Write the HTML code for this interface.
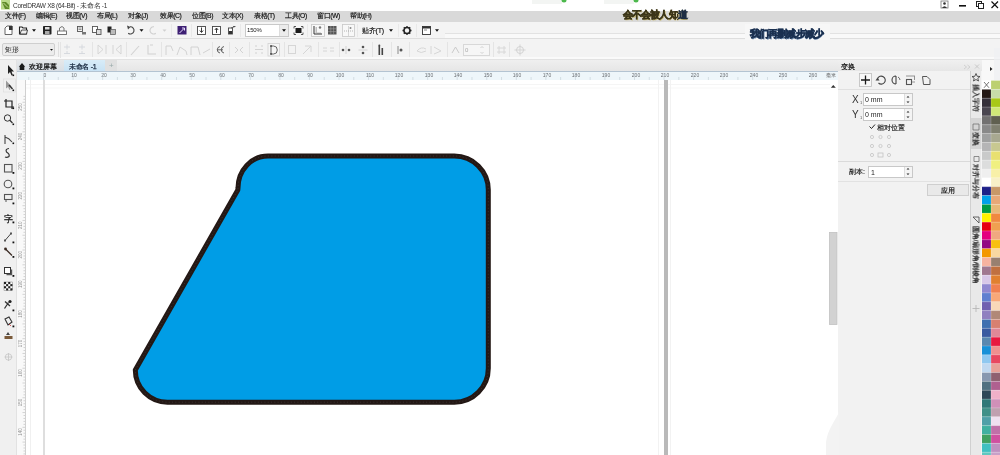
<!DOCTYPE html>
<html><head><meta charset="utf-8">
<style>
*{margin:0;padding:0;box-sizing:border-box}
html,body{width:1000px;height:455px;overflow:hidden;background:#fff;font-family:"Liberation Sans",sans-serif;color:#222}
.a{position:absolute}
.t{position:absolute;white-space:nowrap;line-height:1;will-change:transform}
.mi{top:12.5px;font-size:6.8px;color:#111;letter-spacing:-0.4px;-webkit-text-stroke:0.15px #111}
.rl{top:73px;font-size:5px;color:#6a6e72;transform:translateX(-50%)}
.dk{font-size:6.5px;color:#222}
</style></head><body>
<!-- backgrounds -->
<div class="a" style="left:0;top:0;width:1000px;height:11px;background:#fff"></div>
<div class="a" style="left:0;top:11px;width:1000px;height:11px;background:#d9d9d9"></div>
<div class="a" style="left:0;top:22px;width:1000px;height:16px;background:#f4f4f4"></div>
<div class="a" style="left:0;top:38px;width:1000px;height:1px;background:#dedede"></div>
<div class="a" style="left:0;top:39px;width:1000px;height:21px;background:#f3f3f3;border-bottom:1px solid #e2e2e2"></div>
<div class="a" style="left:0;top:57px;width:1000px;height:2px;background:#fafafa"></div>
<div class="a" style="left:0;top:60px;width:17px;height:395px;background:#f0f0f0"></div>
<div class="a" style="left:17px;top:60px;width:821px;height:11px;background:linear-gradient(#efefef,#e6e6e6)"></div>
<div class="a" style="left:17px;top:60px;width:47px;height:11px;background:linear-gradient(#e6e8ea,#d8dee4)"></div>
<div class="a" style="left:64px;top:60px;width:41px;height:11px;background:linear-gradient(#d8ecf8,#c8e2f4)"></div>
<div class="a" style="left:105px;top:60px;width:12px;height:11px;background:#e0e0e0"></div>
<div class="a" style="left:17px;top:70.5px;width:821px;height:10px;background:#eef6fa;border-top:1px solid #b4c4d2;border-bottom:1px solid #d4d8dc"></div>
<div class="a" style="left:17px;top:80px;width:8px;height:375px;background:#f9f9f9"></div>
<div class="a" style="left:25px;top:80px;width:805px;height:375px;background:#fff"></div>
<div class="a" style="left:830px;top:80px;width:8px;height:375px;background:#fff"></div>
<div class="a" style="left:838px;top:60px;width:144px;height:11px;background:linear-gradient(#f0f0f0,#e6e6e6)"></div>
<div class="a" style="left:838px;top:71px;width:132px;height:384px;background:#f2f2f2"></div>
<div class="a" style="left:970px;top:71px;width:12px;height:384px;background:#e9e9e9"></div>
<div class="a" style="left:982px;top:60px;width:18px;height:20.5px;background:#f8f8f8"></div>

<!-- title -->
<div class="t" style="left:13px;top:2.5px;font-size:6.5px;color:#333;letter-spacing:-0.28px">CorelDRAW X8 (64-Bit) - 未命名 -1</div>
<!-- menu -->
<div class="t mi" style="left:5px">文件(F)</div>
<div class="t mi" style="left:36px">编辑(E)</div>
<div class="t mi" style="left:66px">视图(V)</div>
<div class="t mi" style="left:97px">布局(L)</div>
<div class="t mi" style="left:128px">对象(J)</div>
<div class="t mi" style="left:160px">效果(C)</div>
<div class="t mi" style="left:192px">位图(B)</div>
<div class="t mi" style="left:222px">文本(X)</div>
<div class="t mi" style="left:254px">表格(T)</div>
<div class="t mi" style="left:285px">工具(O)</div>
<div class="t mi" style="left:317px">窗口(W)</div>
<div class="t mi" style="left:350px">帮助(H)</div>

<!-- toolbar texts -->
<div class="a" style="left:245px;top:24px;width:44px;height:13px;background:#fff;border:1px solid #c9c9c9"></div>
<div class="a" style="left:279px;top:25px;width:9px;height:11px;background:#ececec;border-left:1px solid #ddd"></div>
<div class="t" style="left:247px;top:27.3px;font-size:6px;color:#222;letter-spacing:-0.2px">150%</div>
<div class="t" style="left:362px;top:27px;font-size:7px;color:#111;letter-spacing:-0.2px;-webkit-text-stroke:0.15px #111">贴齐(T)</div>
<!-- property bar combo -->
<div class="a" style="left:2px;top:43px;width:53px;height:13px;background:#ececec;border:1px solid #cfcfcf;border-radius:2px"></div>
<div class="t" style="left:5px;top:46px;font-size:7px;color:#222">矩形</div>
<div class="a" style="left:463px;top:44px;width:27px;height:12px;background:#f6f6f6;border:1px solid #d8d8d8"></div>
<div class="t" style="left:465px;top:47px;font-size:6px;color:#aaa">0</div>

<!-- tabs -->
<div class="t" style="left:29px;top:62.5px;font-size:7px;color:#111;-webkit-text-stroke:0.25px #111">欢迎屏幕</div>
<div class="t" style="left:69px;top:62.5px;font-size:7px;color:#1a2a40;-webkit-text-stroke:0.25px #1a2a40;letter-spacing:-0.3px">未命名 -1</div>
<div class="t" style="left:109px;top:62px;font-size:8px;color:#9aa">+</div>
<div class="t rl" style="left:44.5px">0</div><div class="t rl" style="left:74.0px">10</div><div class="t rl" style="left:103.6px">20</div><div class="t rl" style="left:133.2px">30</div><div class="t rl" style="left:162.7px">40</div><div class="t rl" style="left:192.2px">50</div><div class="t rl" style="left:221.8px">60</div><div class="t rl" style="left:251.3px">70</div><div class="t rl" style="left:280.9px">80</div><div class="t rl" style="left:310.4px">90</div><div class="t rl" style="left:340.0px">100</div><div class="t rl" style="left:369.6px">110</div><div class="t rl" style="left:399.1px">120</div><div class="t rl" style="left:428.7px">130</div><div class="t rl" style="left:458.2px">140</div><div class="t rl" style="left:487.8px">150</div><div class="t rl" style="left:517.3px">160</div><div class="t rl" style="left:546.9px">170</div><div class="t rl" style="left:576.4px">180</div><div class="t rl" style="left:606.0px">190</div><div class="t rl" style="left:635.5px">200</div><div class="t rl" style="left:665.1px">210</div><div class="t rl" style="left:694.6px">220</div><div class="t rl" style="left:724.1px">230</div><div class="t rl" style="left:753.7px">240</div><div class="t rl" style="left:783.2px">250</div><div class="t rl" style="left:812.8px">260</div>
<div class="t" style="left:826px;top:73px;font-size:5px;color:#555">毫米</div>

<!-- docker -->
<div class="t" style="left:841px;top:62.5px;font-size:7px;color:#111;-webkit-text-stroke:0.2px #111">变换</div>
<div class="t" style="left:852px;top:94.5px;font-size:10px;color:#333">X</div><div class="t" style="left:859.5px;top:101px;font-size:4px;color:#555">1</div>
<div class="t" style="left:852px;top:109.5px;font-size:10px;color:#333">Y</div><div class="t" style="left:859.5px;top:116px;font-size:4px;color:#555">1</div>
<div class="a" style="left:863px;top:93px;width:50px;height:13px;background:#fff;border:1px solid #c8c8c8"></div>
<div class="a" style="left:863px;top:108px;width:50px;height:13px;background:#fff;border:1px solid #c8c8c8"></div>
<div class="a" style="left:904px;top:94px;width:8px;height:11px;background:#f4f4f4;border-left:1px solid #ddd"></div>
<div class="a" style="left:904px;top:109px;width:8px;height:11px;background:#f4f4f4;border-left:1px solid #ddd"></div>
<div class="t" style="left:865px;top:96px;font-size:7px;color:#222">0 mm</div>
<div class="t" style="left:865px;top:111px;font-size:7px;color:#222">0 mm</div>
<div class="t" style="left:877px;top:123.5px;font-size:7px;color:#111;-webkit-text-stroke:0.15px #111">相对位置</div>
<div class="a" style="left:838px;top:160.5px;width:132px;height:1px;background:#dadada"></div>
<div class="a" style="left:838px;top:88.5px;width:132px;height:1px;background:#e0e0e0"></div>
<div class="t" style="left:849px;top:168px;font-size:7px;color:#111;-webkit-text-stroke:0.15px #111">副本:</div>
<div class="a" style="left:868px;top:166px;width:45px;height:12px;background:#fff;border:1px solid #c8c8c8"></div>
<div class="a" style="left:904px;top:167px;width:8px;height:10px;background:#f4f4f4;border-left:1px solid #ddd"></div>
<div class="t" style="left:871px;top:168.5px;font-size:7px;color:#222">1</div>
<div class="a" style="left:838px;top:181px;width:132px;height:1px;background:#e2e2e2"></div>
<div class="a" style="left:927px;top:184px;width:42px;height:12px;background:#e9e9e9;border:1px solid #cfcfcf"></div>
<div class="t" style="left:941px;top:186.5px;font-size:7px;color:#111;-webkit-text-stroke:0.15px #111">应用</div>


<svg class="a" style="left:0;top:0" width="1000" height="455" viewBox="0 0 1000 455">

  <!-- title icon -->
  <rect x="1" y="0" width="9" height="9.5" fill="#b9d98a"/>
  <path d="M2,2 L6,2 L9,5 L9,9 L5,9 Z" fill="#5f8a2a"/>
  <path d="M3.5,3 L8,7.5" stroke="#d8ecb0" stroke-width="0.8"/>
  <!-- window controls -->
  <rect x="941" y="1" width="7" height="7" fill="#fff" stroke="#777" stroke-width="0.8"/>
  <circle cx="944.5" cy="3.5" r="1.3" fill="#333"/><path d="M942,8 Q944.5,4.5 947,8 Z" fill="#333"/>
  <rect x="959" y="5" width="7" height="1.6" fill="#111"/>
  <rect x="976.5" y="1.5" width="5" height="5" fill="none" stroke="#222" stroke-width="1"/>
  <rect x="978.5" y="3.5" width="5" height="5" fill="#fff" stroke="#222" stroke-width="1"/>
  <path d="M991.5,1.5 L998,8 M998,1.5 L991.5,8" stroke="#111" stroke-width="1.2"/>
  <!-- toolbar 1 -->
  <path d="M5,28 L7,26 L12,26 L12,34.5 L5,34.5 Z" fill="#fff" stroke="#555" stroke-width="0.9"/>
  <rect x="9" y="26" width="3.5" height="4" fill="#333"/>
  <path d="M19.5,27 L22,27 L23,28 L26.5,28 L26.5,34 L19.5,34 Z" fill="#fff" stroke="#222" stroke-width="1.1"/>
  <path d="M20,34 L21.5,30 L27.5,30 L26.5,34 Z" fill="#eee" stroke="#222" stroke-width="0.8"/>
  <path d="M32,29.3 L36,29.3 L34,31.8 Z" fill="#111"/>
  <rect x="43" y="26" width="8.5" height="8.5" rx="0.8" fill="#222"/>
  <rect x="45" y="27" width="4.5" height="2.5" fill="#ddd"/>
  <rect x="45" y="31" width="4.5" height="3" fill="#aaa"/>
  <path d="M59.5,31 L59.5,28 L62,26.5 L64,28 L64,31" fill="none" stroke="#666" stroke-width="0.9"/>
  <rect x="57.5" y="31" width="9" height="3.5" fill="#fff" stroke="#666" stroke-width="0.9"/>
  <rect x="77.5" y="26.5" width="5" height="5" fill="none" stroke="#555" stroke-width="0.9"/>
  <path d="M78.5,28 h3 M78.5,29.5 h3" stroke="#555" stroke-width="0.6"/>
  <rect x="82" y="32" width="4" height="2.5" fill="#777"/>
  <rect x="92.5" y="26.5" width="5" height="6" fill="#fff" stroke="#555" stroke-width="0.9"/>
  <rect x="96.5" y="29.5" width="4.5" height="5" fill="#ddd" stroke="#555" stroke-width="0.9"/>
  <rect x="107.5" y="26.5" width="4" height="6" fill="#222"/>
  <rect x="110.5" y="29.5" width="5" height="5" fill="#bbb" stroke="#555" stroke-width="0.7"/>
  <path d="M130,26.8 A3.6,3.6 0 1 1 128.2,33.2" fill="none" stroke="#444" stroke-width="1.1"/>
  <path d="M127,25.5 L130.5,27 L128,29.5 Z" fill="#444"/>
  <path d="M139.5,29.3 L143.5,29.3 L141.5,31.8 Z" fill="#111"/>
  <path d="M154,26.8 A3.6,3.6 0 1 0 155.8,33.2" fill="none" stroke="#cfcfcf" stroke-width="1.1"/>
  <path d="M162.5,29.5 L166.5,29.5 L164.5,31.8 Z" fill="#d0d0d0"/>
  <line x1="171.5" y1="24" x2="171.5" y2="37" stroke="#e8e8e8" stroke-width="1"/>
  <rect x="177.5" y="26" width="9" height="8.5" fill="#3d1f73"/>
  <path d="M179.5,33 L184,28.5 M182,28 L184.5,28 L184.5,30.5" stroke="#e8dcff" stroke-width="1" fill="none"/>
  <line x1="191.5" y1="24" x2="191.5" y2="37" stroke="#e8e8e8" stroke-width="1"/>
  <rect x="197.5" y="26.5" width="8" height="8" fill="#fff" stroke="#444" stroke-width="0.9"/>
  <path d="M201.5,27.5 v4.5 M199.8,30.5 L201.5,32.5 L203.2,30.5" stroke="#222" stroke-width="0.9" fill="none"/>
  <rect x="212.5" y="26.5" width="8" height="8" fill="#fff" stroke="#444" stroke-width="0.9"/>
  <path d="M216.5,33 v-4.5 M214.8,30 L216.5,28 L218.2,30" stroke="#222" stroke-width="0.9" fill="none"/>
  <rect x="228.5" y="28" width="4" height="6" fill="#fff" stroke="#444" stroke-width="0.9"/>
  <rect x="229" y="31" width="3" height="3" fill="#333"/>
  <path d="M231,28 L235,26.5 M233,26.5 h2.5" stroke="#444" stroke-width="0.8"/>
  <line x1="240.5" y1="24" x2="240.5" y2="37" stroke="#e8e8e8" stroke-width="1"/>
  <path d="M282,29.3 L286,29.3 L284,31.8 Z" fill="#111"/>
  <rect x="295.5" y="28" width="6" height="5" fill="#1a1a1a"/>
  <path d="M294,26.5 h2 M294,26.5 v2 M303,26.5 h-2 M303,26.5 v2 M294,34.5 h2 M294,34.5 v-2 M303,34.5 h-2 M303,34.5 v-2" stroke="#333" stroke-width="0.8"/>
  <line x1="307.5" y1="24" x2="307.5" y2="37" stroke="#e8e8e8" stroke-width="1"/>
  <rect x="311.5" y="24.5" width="13" height="12" fill="#f8f8f8" stroke="#c8c8c8" stroke-width="0.8"/>
  <path d="M314,26 v8 h8" stroke="#333" stroke-width="1" fill="none"/>
  <path d="M315.5,28 h1.5 M315.5,30 h1.5 M315.5,32 h1.5 M318,32.5 v1 M320,32.5 v1" stroke="#555" stroke-width="0.7"/>
  <circle cx="320" cy="27.5" r="1.2" fill="#777"/>
  <rect x="328" y="26" width="8.5" height="8.5" fill="#555"/>
  <path d="M330.8,26 v8.5 M333.6,26 v8.5 M328,28.8 h8.5 M328,31.6 h8.5" stroke="#aaa" stroke-width="0.5"/>
  <rect x="342.5" y="24.5" width="12" height="12" fill="#f8f8f8" stroke="#c8c8c8" stroke-width="0.8"/>
  <path d="M344,31 h9 M348.5,26.5 v9" stroke="#999" stroke-width="0.7" stroke-dasharray="1,1"/>
  <circle cx="350.5" cy="28" r="1" fill="#888"/>
  <line x1="357.5" y1="24" x2="357.5" y2="37" stroke="#e8e8e8" stroke-width="1"/>
  <path d="M389,29.3 L393,29.3 L391,31.8 Z" fill="#111"/>
  <line x1="398.5" y1="24" x2="398.5" y2="37" stroke="#e8e8e8" stroke-width="1"/>
  <circle cx="407" cy="30.5" r="3" fill="none" stroke="#222" stroke-width="1.6"/>
  <path d="M407,26 v1.5 M407,33.5 v1.5 M402.5,30.5 h1.5 M410,30.5 h1.5 M403.8,27.3 l1,1 M409.2,32.7 l1,1 M410.2,27.3 l-1,1 M404.8,32.7 l-1,1" stroke="#222" stroke-width="1.3"/>
  <line x1="416.5" y1="24" x2="416.5" y2="37" stroke="#e8e8e8" stroke-width="1"/>
  <rect x="422.5" y="26.5" width="8" height="8" fill="#fff" stroke="#333" stroke-width="0.9"/>
  <rect x="422.5" y="26.5" width="8" height="2" fill="#333"/>
  <path d="M424,30 h3" stroke="#555" stroke-width="0.7"/>
  <path d="M435,29.3 L439,29.3 L437,31.8 Z" fill="#111"/>


  <!-- property bar -->
  <path d="M50,49 L53,49 L51.5,50.8 Z" fill="#111"/>
  <line x1="58.5" y1="42" x2="58.5" y2="57" stroke="#e0e0e0" stroke-width="1"/>
  <line x1="60.5" y1="42" x2="60.5" y2="58" stroke="#e4e4e4" stroke-width="1"/>
  <path d="M64,47 h6 M67,44.5 v5 M64,53.5 h6 M67,51 v3" stroke="#d4d7dc" stroke-width="0.9"/>
  <path d="M79,47 h6 M82,44.5 v5 M79,53.5 h6 M82,51 v3" stroke="#d4d7dc" stroke-width="0.9"/>
  <line x1="92.5" y1="42" x2="92.5" y2="57" stroke="#e4e4e4" stroke-width="1"/>
  <path d="M98,45 L98,54 L103,49.5 Z M106,45 L106,54" fill="none" stroke="#d4d4d4" stroke-width="0.9"/>
  <path d="M113,45 L113,54 M116,49.5 L121,45 L121,54 Z" fill="none" stroke="#d2d2d2" stroke-width="0.9"/>
  <line x1="126.5" y1="42" x2="126.5" y2="57" stroke="#e4e4e4" stroke-width="1"/>
  <path d="M131,55 L139,46" stroke="#d2d2d2" stroke-width="1.1"/>
  <path d="M148,45 L148,54 L156,54 M150,45 L153,45" fill="none" stroke="#d2d2d2" stroke-width="1.1"/>
  <line x1="161.5" y1="42" x2="161.5" y2="57" stroke="#e4e4e4" stroke-width="1"/>
  <path d="M166,55 L166,46 L171,46 L173,51 M177,55 L180,47 L186,51 L187,55 M191,55 L191,47 L198,47 L200,55 M203,53 L210,49" fill="none" stroke="#d2d2d2" stroke-width="1"/>
  <line x1="212.5" y1="42" x2="212.5" y2="57" stroke="#e4e4e4" stroke-width="1"/>
  <path d="M220,46.5 A3.3,3.3 0 0 0 220,53 M224,46.5 A3.3,3.3 0 0 0 224,53 M217,49.8 h6" fill="none" stroke="#555" stroke-width="0.9"/>
  <line x1="229.5" y1="42" x2="229.5" y2="57" stroke="#e4e4e4" stroke-width="1"/>
  <path d="M235,47 L238,50 L235,53 M243,47 L240,50 L243,53" fill="none" stroke="#d2d2d2" stroke-width="1"/>
  <line x1="249.5" y1="42" x2="249.5" y2="57" stroke="#e4e4e4" stroke-width="1"/>
  <path d="M256,45 v2 M256,52 v2 M262,45 v2 M262,52 v2 M255,49.5 h8" stroke="#d2d2d2" stroke-width="1"/>
  <rect x="268" y="43.5" width="11.5" height="12.5" fill="#f6f6f6" stroke="#d2d2d2" stroke-width="0.8"/>
  <path d="M271,46 L273.5,46 A3.8,4 0 0 1 273.5,54 L271,54 Z" fill="none" stroke="#555" stroke-width="0.9"/><circle cx="271" cy="46" r="0.9" fill="#444"/><circle cx="271" cy="54" r="0.9" fill="#444"/>
  <line x1="284.5" y1="42" x2="284.5" y2="57" stroke="#e4e4e4" stroke-width="1"/>
  <rect x="288.5" y="45.5" width="7" height="8" fill="none" stroke="#d6d6d6" stroke-width="1"/>
  <path d="M303,54 L311,46 M305,46 L311,46 L311,52" fill="none" stroke="#d6d6d6" stroke-width="1"/>
  <line x1="318.5" y1="42" x2="318.5" y2="57" stroke="#e4e4e4" stroke-width="1"/>
  <path d="M323,48 h4 M330,48 h4 M323,51 h4 M330,51 h4" stroke="#d6d6d6" stroke-width="1"/>
  <line x1="339.5" y1="42" x2="339.5" y2="57" stroke="#e4e4e4" stroke-width="1"/>
  <circle cx="343" cy="50" r="1.3" fill="#555"/><circle cx="349" cy="50" r="1.3" fill="#555"/>
  <path d="M346,46 v8" stroke="#cacaca" stroke-width="0.8"/>
  <circle cx="363" cy="47" r="1.3" fill="#555"/><circle cx="363" cy="53" r="1.3" fill="#555"/>
  <path d="M358.5,50 h9" stroke="#cacaca" stroke-width="0.8"/>
  <line x1="372.5" y1="42" x2="372.5" y2="57" stroke="#e4e4e4" stroke-width="1"/>
  <rect x="378.5" y="46" width="1.6" height="9" fill="#444"/><rect x="381.5" y="48" width="1.6" height="7" fill="#444"/>
  <circle cx="379.3" cy="45.5" r="1" fill="#444"/>
  <line x1="391.5" y1="42" x2="391.5" y2="57" stroke="#e4e4e4" stroke-width="1"/>
  <path d="M398,46 v8" stroke="#888" stroke-width="1"/><circle cx="401" cy="50" r="1.5" fill="#555"/>
  <line x1="409.5" y1="42" x2="409.5" y2="57" stroke="#e4e4e4" stroke-width="1"/>
  <path d="M417,51 Q421,46 426,49 M417,51 Q421,54 426,51" fill="none" stroke="#d6d6d6" stroke-width="1"/>
  <path d="M431,46 L431,54 M434,47 L441,51 L434,54" fill="none" stroke="#d6d6d6" stroke-width="1"/>
  <line x1="447.5" y1="42" x2="447.5" y2="57" stroke="#e4e4e4" stroke-width="1"/>
  <path d="M452,53 L455.5,47 L459,53" fill="none" stroke="#cacaca" stroke-width="1"/>
  <path d="M480.5,48 L482,46.5 L483.5,48 M480.5,52 L482,53.5 L483.5,52" fill="none" stroke="#cacaca" stroke-width="0.8"/>
  <line x1="493.5" y1="42" x2="493.5" y2="57" stroke="#e4e4e4" stroke-width="1"/>
  <path d="M497,48 h9 M497,52 h9 M499,46 v8 M504,46 v8" stroke="#d6d6d6" stroke-width="0.9"/>
  <line x1="509.5" y1="42" x2="509.5" y2="57" stroke="#e4e4e4" stroke-width="1"/>
  <circle cx="520" cy="50" r="3.5" fill="none" stroke="#d2d2d2" stroke-width="1"/>
  <path d="M520,44.5 v11 M514.5,50 h11" stroke="#d2d2d2" stroke-width="0.9"/>

  <!-- tab home icon -->
  <path d="M18.8,66.8 L22,63 L25.2,66.8 L24.3,66.8 L24.3,70 L19.7,70 L19.7,66.8 Z" fill="#1a1a1a"/>

  <!-- toolbox -->
  <path d="M8,65 L8,74 L10,72 L11.5,75.5 L12.8,75 L11.5,71.5 L14,71.5 Z" fill="#222"/>
  <rect x="12.5" y="74.5" width="1.6" height="1.6" fill="#111"/>
  <rect x="3.5" y="79" width="12" height="13" fill="none" stroke="#dedede" stroke-width="0.7"/>
  <path d="M6,80.5 L6,88.5 L8,87 L9.5,90 L10.5,89.5 L9.5,86.5 L11.5,86.5 Z" fill="#999"/>
  <path d="M9,85 L12.5,89" stroke="#333" stroke-width="1.5"/><rect x="12.5" y="89.5" width="1.6" height="1.6" fill="#111"/>
  <path d="M6,99 v8 h8 M4,101 h8 v8" fill="none" stroke="#222" stroke-width="1.2"/>
  <rect x="12.5" y="107.5" width="1.6" height="1.6" fill="#111"/>
  <circle cx="7.5" cy="118" r="3.2" fill="none" stroke="#333" stroke-width="1"/>
  <path d="M9.8,120.3 L12.5,123" stroke="#333" stroke-width="1.3"/><rect x="12.5" y="123.5" width="1.6" height="1.6" fill="#111"/>
  <path d="M5,135 L5,144 M5,137 Q9,138 12,142" fill="none" stroke="#444" stroke-width="1.1"/>
  <rect x="12.5" y="142.5" width="1.6" height="1.6" fill="#111"/>
  <path d="M9,148.5 Q5,149 6.5,152 Q10,154 9,156.5 Q7,158 5,157" fill="none" stroke="#333" stroke-width="1.2"/>
  <rect x="4.5" y="164.5" width="7.5" height="7.5" fill="none" stroke="#555" stroke-width="1.1"/>
  <rect x="12.5" y="172" width="1.8" height="1.8" fill="#111"/>
  <circle cx="8" cy="184" r="3.8" fill="none" stroke="#555" stroke-width="1.1"/>
  <rect x="12.5" y="187.5" width="1.8" height="1.8" fill="#111"/>
  <rect x="4.5" y="194.5" width="7.5" height="5" fill="none" stroke="#555" stroke-width="1.1"/>
  <path d="M6,199.5 v2.5" stroke="#555" stroke-width="1"/>
  <rect x="12.5" y="202.5" width="1.8" height="1.8" fill="#111"/>
  <text x="3.5" y="221.5" font-size="9" font-family="Liberation Sans" fill="#222" stroke="#222" stroke-width="0.3">字</text>
  <rect x="12.5" y="221.5" width="1.8" height="1.8" fill="#111"/>
  <path d="M5,240.5 L11,233.5" stroke="#444" stroke-width="1"/><rect x="4" y="239.5" width="2" height="2" fill="#555"/><rect x="10" y="232.5" width="2" height="2" fill="#555"/>
  <rect x="12.5" y="241.5" width="1.8" height="1.8" fill="#111"/>
  <path d="M5.5,249 L12,255.5" stroke="#3a2a22" stroke-width="1.3"/><circle cx="5.5" cy="249" r="1.4" fill="#3a2a22"/>
  <rect x="12.5" y="256" width="1.8" height="1.8" fill="#111"/>
  <rect x="4.5" y="267.5" width="6" height="6" fill="#fff" stroke="#333" stroke-width="1"/>
  <path d="M6.5,274.5 h5 v-5" fill="none" stroke="#555" stroke-width="1.4"/>
  <rect x="12.5" y="275" width="1.8" height="1.8" fill="#111"/>
  <rect x="4" y="282" width="8.4" height="8.4" fill="#fff" stroke="#555" stroke-width="0.4"/><rect x="4.0" y="282.0" width="2.1" height="2.1" fill="#222"/><rect x="4.0" y="286.2" width="2.1" height="2.1" fill="#222"/><rect x="6.1" y="284.1" width="2.1" height="2.1" fill="#222"/><rect x="6.1" y="288.3" width="2.1" height="2.1" fill="#222"/><rect x="8.2" y="282.0" width="2.1" height="2.1" fill="#222"/><rect x="8.2" y="286.2" width="2.1" height="2.1" fill="#222"/><rect x="10.3" y="284.1" width="2.1" height="2.1" fill="#222"/><rect x="10.3" y="288.3" width="2.1" height="2.1" fill="#222"/>
  <path d="M5,301.5 L10,306 M8.5,302.5 L4.5,308.5" stroke="#333" stroke-width="1.3"/>
  <circle cx="10" cy="301.5" r="1.6" fill="#222"/><rect x="12.5" y="309.5" width="1.8" height="1.8" fill="#111"/>
  <path d="M5,319 L9,317 L12,322 L8,325 Z" fill="none" stroke="#333" stroke-width="1.1"/>
  <path d="M9,324 L11,326" stroke="#c33" stroke-width="0.8"/>
  <rect x="12.5" y="325.5" width="1.8" height="1.8" fill="#111"/>
  <path d="M6,335 L8,332 L10,335 Z" fill="#444"/>
  <rect x="4.5" y="336" width="8" height="3" fill="#7a5a3a"/>
  <circle cx="8.5" cy="357" r="3.2" fill="none" stroke="#c8c8c8" stroke-width="0.9"/>
  <path d="M8.5,353 v8 M4.5,357 h8" stroke="#c8c8c8" stroke-width="0.9"/>
  <line x1="16.5" y1="60" x2="16.5" y2="455" stroke="#e2e2e2" stroke-width="1"/>


  <!-- docker icons -->
  <rect x="859.5" y="73.5" width="12" height="13" fill="#f8f8f8" stroke="#bdbdbd" stroke-width="0.8"/>
  <path d="M865.5,75.5 v9 M861,80 h9" stroke="#1a1a1a" stroke-width="1.3"/>
  <path d="M877.6,78.5 A4,4 0 1 1 878.5,83" fill="none" stroke="#444" stroke-width="1.1"/>
  <path d="M875.5,80.5 L879.5,80.5 L877.5,77.5 Z" fill="#444"/>
  <path d="M896,76 A4,4 0 0 0 896,84 M896,76 v8" fill="none" stroke="#444" stroke-width="1.1"/>
  <path d="M898,77 A3.5,3.5 0 0 1 900,80" fill="none" stroke="#666" stroke-width="1"/>
  <rect x="906.5" y="79.5" width="5" height="5" fill="none" stroke="#555" stroke-width="1.1"/>
  <path d="M906,76 h9 M914.5,76 v4 M912,82 h3" stroke="#888" stroke-width="0.9"/>
  <path d="M922.5,76.5 L927,76.5 L930,79.5 L930,84.5 L923.5,84.5 Z" fill="none" stroke="#555" stroke-width="1"/>
  <path d="M936.5,62 v9" stroke="#fff" stroke-width="0"/>
  <!-- docker spinners -->
  <path d="M906.5,97.5 L908,96 L909.5,97.5 Z M906.5,101.5 L908,103 L909.5,101.5 Z" fill="#222"/>
  <path d="M906.5,112.5 L908,111 L909.5,112.5 Z M906.5,116.5 L908,118 L909.5,116.5 Z" fill="#222"/>
  <path d="M906.5,169.5 L908,168 L909.5,169.5 Z M906.5,173.5 L908,175 L909.5,173.5 Z" fill="#222"/>
  <path d="M869.5,126.5 L871.5,128.5 L875,124.5" fill="none" stroke="#222" stroke-width="1"/>
  <!-- anchor grid -->
  <g fill="none" stroke="#c4c4c4" stroke-width="0.8">
    <circle cx="872" cy="137" r="1.6"/><circle cx="880.5" cy="137" r="1.6"/><circle cx="889" cy="137" r="1.6"/>
    <circle cx="872" cy="146" r="1.6"/><circle cx="880.5" cy="146" r="1.6"/><circle cx="889" cy="146" r="1.6"/>
    <circle cx="872" cy="155" r="1.6"/><rect x="878" y="153" width="5" height="4"/><circle cx="889" cy="155" r="1.6"/>
  </g>
  <path d="M964,65 L966.5,67 L964,69 M967.5,65 L970,67 L967.5,69" stroke="#c4c4c4" stroke-width="0.7" fill="none"/>
  <path d="M975,64.5 L979,68.5 M979,64.5 L975,68.5" stroke="#c0c0c0" stroke-width="0.8"/>
  <!-- tab strip -->
  <line x1="970.5" y1="71" x2="970.5" y2="455" stroke="#d0d0d0" stroke-width="1"/>
  <line x1="981.5" y1="71" x2="981.5" y2="455" stroke="#f4f4f4" stroke-width="1"/>
  <path d="M976,73.5 L977.2,76.3 L980,76.5 L977.8,78.3 L978.5,81 L976,79.5 L973.5,81 L974.2,78.3 L972,76.5 L974.8,76.3 Z" fill="none" stroke="#333" stroke-width="0.8"/>
  <rect x="971" y="118" width="10.5" height="31" fill="#d4d4d4"/>
  <path d="M973,124 L979,124 L979,130 L973,130 Z" fill="none" stroke="#666" stroke-width="0.7"/>
  <path d="M974,156.5 h5 v5 h-5 Z" fill="none" stroke="#666" stroke-width="0.7"/>
  <path d="M973,217 h6 v6 Z" fill="none" stroke="#444" stroke-width="0.8"/>
  <path d="M976,305 v7 M972.5,308.5 h7" stroke="#b8b8b8" stroke-width="0.9"/>


  <!-- toolbar right lines -->
  <line x1="445" y1="33.5" x2="1000" y2="33.5" stroke="#e2e2e2" stroke-width="1"/>
  <rect x="445" y="34" width="555" height="4" fill="#f9f9f9"/>
  <rect x="745" y="24" width="85" height="16" fill="#f7f7f7"/>
  <!-- top green dots -->
  <rect x="532" y="0" width="30" height="4" fill="#f3f5f3"/>
  <rect x="604" y="0" width="30" height="4" fill="#f3f5f3"/>
  <circle cx="564" cy="0" r="2.5" fill="#4cb84c"/>
  <circle cx="636" cy="0" r="2.5" fill="#4cb84c"/>


  <path d="M839,412 C836,420 828,428 826,442 L826,455 L839,455 Z" fill="#f3f3f3"/>
  <!-- page borders -->
  <line x1="25" y1="84.5" x2="830" y2="84.5" stroke="#f5f5f5" stroke-width="1"/>
  <line x1="25" y1="88" x2="830" y2="88" stroke="#f7f7f7" stroke-width="1"/>
  <line x1="25.5" y1="80" x2="25.5" y2="455" stroke="#d0d0d0" stroke-width="1"/>

  <line x1="44" y1="80" x2="44" y2="455" stroke="#dedede" stroke-width="2"/>
  <rect x="664" y="80" width="4" height="375" fill="#b9b9b9"/>
  <line x1="30.5" y1="80" x2="30.5" y2="455" stroke="#f0f0f0" stroke-width="1"/>
  <line x1="658.5" y1="80" x2="658.5" y2="455" stroke="#f2f2f2" stroke-width="1"/>
  <line x1="670.5" y1="80" x2="670.5" y2="455" stroke="#f2f2f2" stroke-width="1"/>
  <!-- scrollbar -->
  <rect x="829.5" y="232.5" width="7.5" height="92" fill="#d2d2d2" stroke="#c2c2c2" stroke-width="0.8"/>
  <path d="M830.8,87.8 L833.3,85 L835.8,87.8 Z" fill="#333"/>
  <!-- rulers -->
  <line x1="28.73" y1="77" x2="28.73" y2="80" stroke="#b8c4cc" stroke-width="0.5"/>
<line x1="43.50" y1="73" x2="43.50" y2="80" stroke="#b8c4cc" stroke-width="0.5"/>
<line x1="58.27" y1="77" x2="58.27" y2="80" stroke="#b8c4cc" stroke-width="0.5"/>
<line x1="73.05" y1="73" x2="73.05" y2="80" stroke="#b8c4cc" stroke-width="0.5"/>
<line x1="87.83" y1="77" x2="87.83" y2="80" stroke="#b8c4cc" stroke-width="0.5"/>
<line x1="102.60" y1="73" x2="102.60" y2="80" stroke="#b8c4cc" stroke-width="0.5"/>
<line x1="117.38" y1="77" x2="117.38" y2="80" stroke="#b8c4cc" stroke-width="0.5"/>
<line x1="132.15" y1="73" x2="132.15" y2="80" stroke="#b8c4cc" stroke-width="0.5"/>
<line x1="146.93" y1="77" x2="146.93" y2="80" stroke="#b8c4cc" stroke-width="0.5"/>
<line x1="161.70" y1="73" x2="161.70" y2="80" stroke="#b8c4cc" stroke-width="0.5"/>
<line x1="176.47" y1="77" x2="176.47" y2="80" stroke="#b8c4cc" stroke-width="0.5"/>
<line x1="191.25" y1="73" x2="191.25" y2="80" stroke="#b8c4cc" stroke-width="0.5"/>
<line x1="206.03" y1="77" x2="206.03" y2="80" stroke="#b8c4cc" stroke-width="0.5"/>
<line x1="220.80" y1="73" x2="220.80" y2="80" stroke="#b8c4cc" stroke-width="0.5"/>
<line x1="235.57" y1="77" x2="235.57" y2="80" stroke="#b8c4cc" stroke-width="0.5"/>
<line x1="250.35" y1="73" x2="250.35" y2="80" stroke="#b8c4cc" stroke-width="0.5"/>
<line x1="265.12" y1="77" x2="265.12" y2="80" stroke="#b8c4cc" stroke-width="0.5"/>
<line x1="279.90" y1="73" x2="279.90" y2="80" stroke="#b8c4cc" stroke-width="0.5"/>
<line x1="294.68" y1="77" x2="294.68" y2="80" stroke="#b8c4cc" stroke-width="0.5"/>
<line x1="309.45" y1="73" x2="309.45" y2="80" stroke="#b8c4cc" stroke-width="0.5"/>
<line x1="324.23" y1="77" x2="324.23" y2="80" stroke="#b8c4cc" stroke-width="0.5"/>
<line x1="339.00" y1="73" x2="339.00" y2="80" stroke="#b8c4cc" stroke-width="0.5"/>
<line x1="353.77" y1="77" x2="353.77" y2="80" stroke="#b8c4cc" stroke-width="0.5"/>
<line x1="368.55" y1="73" x2="368.55" y2="80" stroke="#b8c4cc" stroke-width="0.5"/>
<line x1="383.32" y1="77" x2="383.32" y2="80" stroke="#b8c4cc" stroke-width="0.5"/>
<line x1="398.10" y1="73" x2="398.10" y2="80" stroke="#b8c4cc" stroke-width="0.5"/>
<line x1="412.88" y1="77" x2="412.88" y2="80" stroke="#b8c4cc" stroke-width="0.5"/>
<line x1="427.65" y1="73" x2="427.65" y2="80" stroke="#b8c4cc" stroke-width="0.5"/>
<line x1="442.43" y1="77" x2="442.43" y2="80" stroke="#b8c4cc" stroke-width="0.5"/>
<line x1="457.20" y1="73" x2="457.20" y2="80" stroke="#b8c4cc" stroke-width="0.5"/>
<line x1="471.98" y1="77" x2="471.98" y2="80" stroke="#b8c4cc" stroke-width="0.5"/>
<line x1="486.75" y1="73" x2="486.75" y2="80" stroke="#b8c4cc" stroke-width="0.5"/>
<line x1="501.52" y1="77" x2="501.52" y2="80" stroke="#b8c4cc" stroke-width="0.5"/>
<line x1="516.30" y1="73" x2="516.30" y2="80" stroke="#b8c4cc" stroke-width="0.5"/>
<line x1="531.08" y1="77" x2="531.08" y2="80" stroke="#b8c4cc" stroke-width="0.5"/>
<line x1="545.85" y1="73" x2="545.85" y2="80" stroke="#b8c4cc" stroke-width="0.5"/>
<line x1="560.62" y1="77" x2="560.62" y2="80" stroke="#b8c4cc" stroke-width="0.5"/>
<line x1="575.40" y1="73" x2="575.40" y2="80" stroke="#b8c4cc" stroke-width="0.5"/>
<line x1="590.17" y1="77" x2="590.17" y2="80" stroke="#b8c4cc" stroke-width="0.5"/>
<line x1="604.95" y1="73" x2="604.95" y2="80" stroke="#b8c4cc" stroke-width="0.5"/>
<line x1="619.73" y1="77" x2="619.73" y2="80" stroke="#b8c4cc" stroke-width="0.5"/>
<line x1="634.50" y1="73" x2="634.50" y2="80" stroke="#b8c4cc" stroke-width="0.5"/>
<line x1="649.27" y1="77" x2="649.27" y2="80" stroke="#b8c4cc" stroke-width="0.5"/>
<line x1="664.05" y1="73" x2="664.05" y2="80" stroke="#b8c4cc" stroke-width="0.5"/>
<line x1="678.83" y1="77" x2="678.83" y2="80" stroke="#b8c4cc" stroke-width="0.5"/>
<line x1="693.60" y1="73" x2="693.60" y2="80" stroke="#b8c4cc" stroke-width="0.5"/>
<line x1="708.38" y1="77" x2="708.38" y2="80" stroke="#b8c4cc" stroke-width="0.5"/>
<line x1="723.15" y1="73" x2="723.15" y2="80" stroke="#b8c4cc" stroke-width="0.5"/>
<line x1="737.92" y1="77" x2="737.92" y2="80" stroke="#b8c4cc" stroke-width="0.5"/>
<line x1="752.70" y1="73" x2="752.70" y2="80" stroke="#b8c4cc" stroke-width="0.5"/>
<line x1="767.48" y1="77" x2="767.48" y2="80" stroke="#b8c4cc" stroke-width="0.5"/>
<line x1="782.25" y1="73" x2="782.25" y2="80" stroke="#b8c4cc" stroke-width="0.5"/>
<line x1="797.02" y1="77" x2="797.02" y2="80" stroke="#b8c4cc" stroke-width="0.5"/>
<line x1="811.80" y1="73" x2="811.80" y2="80" stroke="#b8c4cc" stroke-width="0.5"/>
  <text x="0" y="0" transform="translate(22,107.0) rotate(-90)" font-size="4.5" fill="#909090" text-anchor="middle" font-family="Liberation Sans">250</text>
<text x="0" y="0" transform="translate(22,136.6) rotate(-90)" font-size="4.5" fill="#909090" text-anchor="middle" font-family="Liberation Sans">240</text>
<text x="0" y="0" transform="translate(22,166.1) rotate(-90)" font-size="4.5" fill="#909090" text-anchor="middle" font-family="Liberation Sans">230</text>
<text x="0" y="0" transform="translate(22,195.7) rotate(-90)" font-size="4.5" fill="#909090" text-anchor="middle" font-family="Liberation Sans">220</text>
<text x="0" y="0" transform="translate(22,225.2) rotate(-90)" font-size="4.5" fill="#909090" text-anchor="middle" font-family="Liberation Sans">210</text>
<text x="0" y="0" transform="translate(22,254.8) rotate(-90)" font-size="4.5" fill="#909090" text-anchor="middle" font-family="Liberation Sans">200</text>
<text x="0" y="0" transform="translate(22,284.3) rotate(-90)" font-size="4.5" fill="#909090" text-anchor="middle" font-family="Liberation Sans">190</text>
<text x="0" y="0" transform="translate(22,313.9) rotate(-90)" font-size="4.5" fill="#909090" text-anchor="middle" font-family="Liberation Sans">180</text>
<text x="0" y="0" transform="translate(22,343.4) rotate(-90)" font-size="4.5" fill="#909090" text-anchor="middle" font-family="Liberation Sans">170</text>
<text x="0" y="0" transform="translate(22,372.9) rotate(-90)" font-size="4.5" fill="#909090" text-anchor="middle" font-family="Liberation Sans">160</text>
<text x="0" y="0" transform="translate(22,402.5) rotate(-90)" font-size="4.5" fill="#909090" text-anchor="middle" font-family="Liberation Sans">150</text>
<text x="0" y="0" transform="translate(22,432.1) rotate(-90)" font-size="4.5" fill="#909090" text-anchor="middle" font-family="Liberation Sans">140</text>
<line x1="23.5" y1="96.36" x2="25" y2="96.36" stroke="#b8b8b8" stroke-width="0.6"/>
<line x1="23.5" y1="99.32" x2="25" y2="99.32" stroke="#b8b8b8" stroke-width="0.6"/>
<line x1="22.5" y1="102.28" x2="25" y2="102.28" stroke="#b8b8b8" stroke-width="0.6"/>
<line x1="23.5" y1="105.23" x2="25" y2="105.23" stroke="#b8b8b8" stroke-width="0.6"/>
<line x1="23.5" y1="108.19" x2="25" y2="108.19" stroke="#b8b8b8" stroke-width="0.6"/>
<line x1="23.5" y1="111.14" x2="25" y2="111.14" stroke="#b8b8b8" stroke-width="0.6"/>
<line x1="23.5" y1="114.09" x2="25" y2="114.09" stroke="#b8b8b8" stroke-width="0.6"/>
<line x1="22.5" y1="117.05" x2="25" y2="117.05" stroke="#b8b8b8" stroke-width="0.6"/>
<line x1="23.5" y1="120.00" x2="25" y2="120.00" stroke="#b8b8b8" stroke-width="0.6"/>
<line x1="23.5" y1="122.96" x2="25" y2="122.96" stroke="#b8b8b8" stroke-width="0.6"/>
<line x1="23.5" y1="125.92" x2="25" y2="125.92" stroke="#b8b8b8" stroke-width="0.6"/>
<line x1="23.5" y1="128.87" x2="25" y2="128.87" stroke="#b8b8b8" stroke-width="0.6"/>
<line x1="22.5" y1="131.82" x2="25" y2="131.82" stroke="#b8b8b8" stroke-width="0.6"/>
<line x1="23.5" y1="134.78" x2="25" y2="134.78" stroke="#b8b8b8" stroke-width="0.6"/>
<line x1="23.5" y1="137.74" x2="25" y2="137.74" stroke="#b8b8b8" stroke-width="0.6"/>
<line x1="23.5" y1="140.69" x2="25" y2="140.69" stroke="#b8b8b8" stroke-width="0.6"/>
<line x1="23.5" y1="143.65" x2="25" y2="143.65" stroke="#b8b8b8" stroke-width="0.6"/>
<line x1="22.5" y1="146.60" x2="25" y2="146.60" stroke="#b8b8b8" stroke-width="0.6"/>
<line x1="23.5" y1="149.56" x2="25" y2="149.56" stroke="#b8b8b8" stroke-width="0.6"/>
<line x1="23.5" y1="152.51" x2="25" y2="152.51" stroke="#b8b8b8" stroke-width="0.6"/>
<line x1="23.5" y1="155.47" x2="25" y2="155.47" stroke="#b8b8b8" stroke-width="0.6"/>
<line x1="23.5" y1="158.42" x2="25" y2="158.42" stroke="#b8b8b8" stroke-width="0.6"/>
<line x1="22.5" y1="161.38" x2="25" y2="161.38" stroke="#b8b8b8" stroke-width="0.6"/>
<line x1="23.5" y1="164.33" x2="25" y2="164.33" stroke="#b8b8b8" stroke-width="0.6"/>
<line x1="23.5" y1="167.28" x2="25" y2="167.28" stroke="#b8b8b8" stroke-width="0.6"/>
<line x1="23.5" y1="170.24" x2="25" y2="170.24" stroke="#b8b8b8" stroke-width="0.6"/>
<line x1="23.5" y1="173.19" x2="25" y2="173.19" stroke="#b8b8b8" stroke-width="0.6"/>
<line x1="22.5" y1="176.15" x2="25" y2="176.15" stroke="#b8b8b8" stroke-width="0.6"/>
<line x1="23.5" y1="179.11" x2="25" y2="179.11" stroke="#b8b8b8" stroke-width="0.6"/>
<line x1="23.5" y1="182.06" x2="25" y2="182.06" stroke="#b8b8b8" stroke-width="0.6"/>
<line x1="23.5" y1="185.01" x2="25" y2="185.01" stroke="#b8b8b8" stroke-width="0.6"/>
<line x1="23.5" y1="187.97" x2="25" y2="187.97" stroke="#b8b8b8" stroke-width="0.6"/>
<line x1="22.5" y1="190.93" x2="25" y2="190.93" stroke="#b8b8b8" stroke-width="0.6"/>
<line x1="23.5" y1="193.88" x2="25" y2="193.88" stroke="#b8b8b8" stroke-width="0.6"/>
<line x1="23.5" y1="196.84" x2="25" y2="196.84" stroke="#b8b8b8" stroke-width="0.6"/>
<line x1="23.5" y1="199.79" x2="25" y2="199.79" stroke="#b8b8b8" stroke-width="0.6"/>
<line x1="23.5" y1="202.75" x2="25" y2="202.75" stroke="#b8b8b8" stroke-width="0.6"/>
<line x1="22.5" y1="205.70" x2="25" y2="205.70" stroke="#b8b8b8" stroke-width="0.6"/>
<line x1="23.5" y1="208.66" x2="25" y2="208.66" stroke="#b8b8b8" stroke-width="0.6"/>
<line x1="23.5" y1="211.61" x2="25" y2="211.61" stroke="#b8b8b8" stroke-width="0.6"/>
<line x1="23.5" y1="214.56" x2="25" y2="214.56" stroke="#b8b8b8" stroke-width="0.6"/>
<line x1="23.5" y1="217.52" x2="25" y2="217.52" stroke="#b8b8b8" stroke-width="0.6"/>
<line x1="22.5" y1="220.47" x2="25" y2="220.47" stroke="#b8b8b8" stroke-width="0.6"/>
<line x1="23.5" y1="223.43" x2="25" y2="223.43" stroke="#b8b8b8" stroke-width="0.6"/>
<line x1="23.5" y1="226.39" x2="25" y2="226.39" stroke="#b8b8b8" stroke-width="0.6"/>
<line x1="23.5" y1="229.34" x2="25" y2="229.34" stroke="#b8b8b8" stroke-width="0.6"/>
<line x1="23.5" y1="232.30" x2="25" y2="232.30" stroke="#b8b8b8" stroke-width="0.6"/>
<line x1="22.5" y1="235.25" x2="25" y2="235.25" stroke="#b8b8b8" stroke-width="0.6"/>
<line x1="23.5" y1="238.20" x2="25" y2="238.20" stroke="#b8b8b8" stroke-width="0.6"/>
<line x1="23.5" y1="241.16" x2="25" y2="241.16" stroke="#b8b8b8" stroke-width="0.6"/>
<line x1="23.5" y1="244.12" x2="25" y2="244.12" stroke="#b8b8b8" stroke-width="0.6"/>
<line x1="23.5" y1="247.07" x2="25" y2="247.07" stroke="#b8b8b8" stroke-width="0.6"/>
<line x1="22.5" y1="250.03" x2="25" y2="250.03" stroke="#b8b8b8" stroke-width="0.6"/>
<line x1="23.5" y1="252.98" x2="25" y2="252.98" stroke="#b8b8b8" stroke-width="0.6"/>
<line x1="23.5" y1="255.94" x2="25" y2="255.94" stroke="#b8b8b8" stroke-width="0.6"/>
<line x1="23.5" y1="258.89" x2="25" y2="258.89" stroke="#b8b8b8" stroke-width="0.6"/>
<line x1="23.5" y1="261.85" x2="25" y2="261.85" stroke="#b8b8b8" stroke-width="0.6"/>
<line x1="22.5" y1="264.80" x2="25" y2="264.80" stroke="#b8b8b8" stroke-width="0.6"/>
<line x1="23.5" y1="267.75" x2="25" y2="267.75" stroke="#b8b8b8" stroke-width="0.6"/>
<line x1="23.5" y1="270.71" x2="25" y2="270.71" stroke="#b8b8b8" stroke-width="0.6"/>
<line x1="23.5" y1="273.67" x2="25" y2="273.67" stroke="#b8b8b8" stroke-width="0.6"/>
<line x1="23.5" y1="276.62" x2="25" y2="276.62" stroke="#b8b8b8" stroke-width="0.6"/>
<line x1="22.5" y1="279.57" x2="25" y2="279.57" stroke="#b8b8b8" stroke-width="0.6"/>
<line x1="23.5" y1="282.53" x2="25" y2="282.53" stroke="#b8b8b8" stroke-width="0.6"/>
<line x1="23.5" y1="285.49" x2="25" y2="285.49" stroke="#b8b8b8" stroke-width="0.6"/>
<line x1="23.5" y1="288.44" x2="25" y2="288.44" stroke="#b8b8b8" stroke-width="0.6"/>
<line x1="23.5" y1="291.39" x2="25" y2="291.39" stroke="#b8b8b8" stroke-width="0.6"/>
<line x1="22.5" y1="294.35" x2="25" y2="294.35" stroke="#b8b8b8" stroke-width="0.6"/>
<line x1="23.5" y1="297.31" x2="25" y2="297.31" stroke="#b8b8b8" stroke-width="0.6"/>
<line x1="23.5" y1="300.26" x2="25" y2="300.26" stroke="#b8b8b8" stroke-width="0.6"/>
<line x1="23.5" y1="303.22" x2="25" y2="303.22" stroke="#b8b8b8" stroke-width="0.6"/>
<line x1="23.5" y1="306.17" x2="25" y2="306.17" stroke="#b8b8b8" stroke-width="0.6"/>
<line x1="22.5" y1="309.12" x2="25" y2="309.12" stroke="#b8b8b8" stroke-width="0.6"/>
<line x1="23.5" y1="312.08" x2="25" y2="312.08" stroke="#b8b8b8" stroke-width="0.6"/>
<line x1="23.5" y1="315.03" x2="25" y2="315.03" stroke="#b8b8b8" stroke-width="0.6"/>
<line x1="23.5" y1="317.99" x2="25" y2="317.99" stroke="#b8b8b8" stroke-width="0.6"/>
<line x1="23.5" y1="320.95" x2="25" y2="320.95" stroke="#b8b8b8" stroke-width="0.6"/>
<line x1="22.5" y1="323.90" x2="25" y2="323.90" stroke="#b8b8b8" stroke-width="0.6"/>
<line x1="23.5" y1="326.86" x2="25" y2="326.86" stroke="#b8b8b8" stroke-width="0.6"/>
<line x1="23.5" y1="329.81" x2="25" y2="329.81" stroke="#b8b8b8" stroke-width="0.6"/>
<line x1="23.5" y1="332.76" x2="25" y2="332.76" stroke="#b8b8b8" stroke-width="0.6"/>
<line x1="23.5" y1="335.72" x2="25" y2="335.72" stroke="#b8b8b8" stroke-width="0.6"/>
<line x1="22.5" y1="338.68" x2="25" y2="338.68" stroke="#b8b8b8" stroke-width="0.6"/>
<line x1="23.5" y1="341.63" x2="25" y2="341.63" stroke="#b8b8b8" stroke-width="0.6"/>
<line x1="23.5" y1="344.58" x2="25" y2="344.58" stroke="#b8b8b8" stroke-width="0.6"/>
<line x1="23.5" y1="347.54" x2="25" y2="347.54" stroke="#b8b8b8" stroke-width="0.6"/>
<line x1="23.5" y1="350.50" x2="25" y2="350.50" stroke="#b8b8b8" stroke-width="0.6"/>
<line x1="22.5" y1="353.45" x2="25" y2="353.45" stroke="#b8b8b8" stroke-width="0.6"/>
<line x1="23.5" y1="356.41" x2="25" y2="356.41" stroke="#b8b8b8" stroke-width="0.6"/>
<line x1="23.5" y1="359.36" x2="25" y2="359.36" stroke="#b8b8b8" stroke-width="0.6"/>
<line x1="23.5" y1="362.31" x2="25" y2="362.31" stroke="#b8b8b8" stroke-width="0.6"/>
<line x1="23.5" y1="365.27" x2="25" y2="365.27" stroke="#b8b8b8" stroke-width="0.6"/>
<line x1="22.5" y1="368.23" x2="25" y2="368.23" stroke="#b8b8b8" stroke-width="0.6"/>
<line x1="23.5" y1="371.18" x2="25" y2="371.18" stroke="#b8b8b8" stroke-width="0.6"/>
<line x1="23.5" y1="374.13" x2="25" y2="374.13" stroke="#b8b8b8" stroke-width="0.6"/>
<line x1="23.5" y1="377.09" x2="25" y2="377.09" stroke="#b8b8b8" stroke-width="0.6"/>
<line x1="23.5" y1="380.05" x2="25" y2="380.05" stroke="#b8b8b8" stroke-width="0.6"/>
<line x1="22.5" y1="383.00" x2="25" y2="383.00" stroke="#b8b8b8" stroke-width="0.6"/>
<line x1="23.5" y1="385.96" x2="25" y2="385.96" stroke="#b8b8b8" stroke-width="0.6"/>
<line x1="23.5" y1="388.91" x2="25" y2="388.91" stroke="#b8b8b8" stroke-width="0.6"/>
<line x1="23.5" y1="391.87" x2="25" y2="391.87" stroke="#b8b8b8" stroke-width="0.6"/>
<line x1="23.5" y1="394.82" x2="25" y2="394.82" stroke="#b8b8b8" stroke-width="0.6"/>
<line x1="22.5" y1="397.77" x2="25" y2="397.77" stroke="#b8b8b8" stroke-width="0.6"/>
<line x1="23.5" y1="400.73" x2="25" y2="400.73" stroke="#b8b8b8" stroke-width="0.6"/>
<line x1="23.5" y1="403.69" x2="25" y2="403.69" stroke="#b8b8b8" stroke-width="0.6"/>
<line x1="23.5" y1="406.64" x2="25" y2="406.64" stroke="#b8b8b8" stroke-width="0.6"/>
<line x1="23.5" y1="409.60" x2="25" y2="409.60" stroke="#b8b8b8" stroke-width="0.6"/>
<line x1="22.5" y1="412.55" x2="25" y2="412.55" stroke="#b8b8b8" stroke-width="0.6"/>
<line x1="23.5" y1="415.50" x2="25" y2="415.50" stroke="#b8b8b8" stroke-width="0.6"/>
<line x1="23.5" y1="418.46" x2="25" y2="418.46" stroke="#b8b8b8" stroke-width="0.6"/>
<line x1="23.5" y1="421.42" x2="25" y2="421.42" stroke="#b8b8b8" stroke-width="0.6"/>
<line x1="23.5" y1="424.37" x2="25" y2="424.37" stroke="#b8b8b8" stroke-width="0.6"/>
<line x1="22.5" y1="427.32" x2="25" y2="427.32" stroke="#b8b8b8" stroke-width="0.6"/>
<line x1="23.5" y1="430.28" x2="25" y2="430.28" stroke="#b8b8b8" stroke-width="0.6"/>
<line x1="23.5" y1="433.24" x2="25" y2="433.24" stroke="#b8b8b8" stroke-width="0.6"/>
<line x1="23.5" y1="436.19" x2="25" y2="436.19" stroke="#b8b8b8" stroke-width="0.6"/>
<line x1="23.5" y1="439.15" x2="25" y2="439.15" stroke="#b8b8b8" stroke-width="0.6"/>
<line x1="22.5" y1="442.10" x2="25" y2="442.10" stroke="#b8b8b8" stroke-width="0.6"/>
<line x1="23.5" y1="445.06" x2="25" y2="445.06" stroke="#b8b8b8" stroke-width="0.6"/>
<line x1="23.5" y1="448.01" x2="25" y2="448.01" stroke="#b8b8b8" stroke-width="0.6"/>
<line x1="23.5" y1="450.97" x2="25" y2="450.97" stroke="#b8b8b8" stroke-width="0.6"/>
<line x1="23.5" y1="453.92" x2="25" y2="453.92" stroke="#b8b8b8" stroke-width="0.6"/>
  <!-- palette -->
  <rect x="982" y="80.50" width="9" height="8.85" fill="#fff"/><path d="M984,82.00 L989,87.80 M989,82.00 L984,87.80" stroke="#555" stroke-width="0.8"/>
<rect x="991" y="80.50" width="9" height="8.85" fill="#bcd070"/>
<rect x="982" y="89.35" width="9" height="8.85" fill="#231815"/>
<rect x="991" y="89.35" width="9" height="8.85" fill="#c8dca8"/>
<rect x="982" y="98.20" width="9" height="8.85" fill="#35303a"/>
<rect x="991" y="98.20" width="9" height="8.85" fill="#a8c818"/>
<rect x="982" y="107.05" width="9" height="8.85" fill="#4a4650"/>
<rect x="991" y="107.05" width="9" height="8.85" fill="#d0e878"/>
<rect x="982" y="115.90" width="9" height="8.85" fill="#727171"/>
<rect x="991" y="115.90" width="9" height="8.85" fill="#606050"/>
<rect x="982" y="124.75" width="9" height="8.85" fill="#898989"/>
<rect x="991" y="124.75" width="9" height="8.85" fill="#808070"/>
<rect x="982" y="133.60" width="9" height="8.85" fill="#9fa0a0"/>
<rect x="991" y="133.60" width="9" height="8.85" fill="#a8a890"/>
<rect x="982" y="142.45" width="9" height="8.85" fill="#b5b5b6"/>
<rect x="991" y="142.45" width="9" height="8.85" fill="#c8c890"/>
<rect x="982" y="151.30" width="9" height="8.85" fill="#c9caca"/>
<rect x="991" y="151.30" width="9" height="8.85" fill="#e8e070"/>
<rect x="982" y="160.15" width="9" height="8.85" fill="#dcdddd"/>
<rect x="991" y="160.15" width="9" height="8.85" fill="#f0f080"/>
<rect x="982" y="169.00" width="9" height="8.85" fill="#efefef"/>
<rect x="991" y="169.00" width="9" height="8.85" fill="#f8f0a8"/>
<rect x="982" y="177.85" width="9" height="8.85" fill="#ffffff"/>
<rect x="991" y="177.85" width="9" height="8.85" fill="#f8f0c8"/>
<rect x="982" y="186.70" width="9" height="8.85" fill="#1d2088"/>
<rect x="991" y="186.70" width="9" height="8.85" fill="#c89868"/>
<rect x="982" y="195.55" width="9" height="8.85" fill="#00a0e9"/>
<rect x="991" y="195.55" width="9" height="8.85" fill="#e8a878"/>
<rect x="982" y="204.40" width="9" height="8.85" fill="#009944"/>
<rect x="991" y="204.40" width="9" height="8.85" fill="#e8b878"/>
<rect x="982" y="213.25" width="9" height="8.85" fill="#fff100"/>
<rect x="991" y="213.25" width="9" height="8.85" fill="#f08840"/>
<rect x="982" y="222.10" width="9" height="8.85" fill="#e60012"/>
<rect x="991" y="222.10" width="9" height="8.85" fill="#f0a050"/>
<rect x="982" y="230.95" width="9" height="8.85" fill="#e4007f"/>
<rect x="991" y="230.95" width="9" height="8.85" fill="#f0a880"/>
<rect x="982" y="239.80" width="9" height="8.85" fill="#920783"/>
<rect x="991" y="239.80" width="9" height="8.85" fill="#f8c010"/>
<rect x="982" y="248.65" width="9" height="8.85" fill="#f39800"/>
<rect x="991" y="248.65" width="9" height="8.85" fill="#f8d8a0"/>
<rect x="982" y="257.50" width="9" height="8.85" fill="#f6b3a0"/>
<rect x="991" y="257.50" width="9" height="8.85" fill="#988070"/>
<rect x="982" y="266.35" width="9" height="8.85" fill="#a07890"/>
<rect x="991" y="266.35" width="9" height="8.85" fill="#c07040"/>
<rect x="982" y="275.20" width="9" height="8.85" fill="#d8c8e8"/>
<rect x="991" y="275.20" width="9" height="8.85" fill="#e08030"/>
<rect x="982" y="284.05" width="9" height="8.85" fill="#9088d0"/>
<rect x="991" y="284.05" width="9" height="8.85" fill="#f08050"/>
<rect x="982" y="292.90" width="9" height="8.85" fill="#6080d0"/>
<rect x="991" y="292.90" width="9" height="8.85" fill="#f8a878"/>
<rect x="982" y="301.75" width="9" height="8.85" fill="#7060b0"/>
<rect x="991" y="301.75" width="9" height="8.85" fill="#f8d8b8"/>
<rect x="982" y="310.60" width="9" height="8.85" fill="#9080c0"/>
<rect x="991" y="310.60" width="9" height="8.85" fill="#b08878"/>
<rect x="982" y="319.45" width="9" height="8.85" fill="#4070b0"/>
<rect x="991" y="319.45" width="9" height="8.85" fill="#d88070"/>
<rect x="982" y="328.30" width="9" height="8.85" fill="#3a5aa0"/>
<rect x="991" y="328.30" width="9" height="8.85" fill="#e08898"/>
<rect x="982" y="337.15" width="9" height="8.85" fill="#5a88b0"/>
<rect x="991" y="337.15" width="9" height="8.85" fill="#e81840"/>
<rect x="982" y="346.00" width="9" height="8.85" fill="#1890d8"/>
<rect x="991" y="346.00" width="9" height="8.85" fill="#f09090"/>
<rect x="982" y="354.85" width="9" height="8.85" fill="#90c8f0"/>
<rect x="991" y="354.85" width="9" height="8.85" fill="#e84860"/>
<rect x="982" y="363.70" width="9" height="8.85" fill="#c0d8f0"/>
<rect x="991" y="363.70" width="9" height="8.85" fill="#e8a098"/>
<rect x="982" y="372.55" width="9" height="8.85" fill="#8898b0"/>
<rect x="991" y="372.55" width="9" height="8.85" fill="#906070"/>
<rect x="982" y="381.40" width="9" height="8.85" fill="#507080"/>
<rect x="991" y="381.40" width="9" height="8.85" fill="#b06090"/>
<rect x="982" y="390.25" width="9" height="8.85" fill="#304858"/>
<rect x="991" y="390.25" width="9" height="8.85" fill="#f0b0c8"/>
<rect x="982" y="399.10" width="9" height="8.85" fill="#307878"/>
<rect x="991" y="399.10" width="9" height="8.85" fill="#d090b8"/>
<rect x="982" y="407.95" width="9" height="8.85" fill="#409088"/>
<rect x="991" y="407.95" width="9" height="8.85" fill="#c0a0b0"/>
<rect x="982" y="416.80" width="9" height="8.85" fill="#50a0a8"/>
<rect x="991" y="416.80" width="9" height="8.85" fill="#f0e0f0"/>
<rect x="982" y="425.65" width="9" height="8.85" fill="#40b0a0"/>
<rect x="991" y="425.65" width="9" height="8.85" fill="#c070a8"/>
<rect x="982" y="434.50" width="9" height="8.85" fill="#40a060"/>
<rect x="991" y="434.50" width="9" height="8.85" fill="#d050a0"/>
<rect x="982" y="443.35" width="9" height="8.85" fill="#40c0c0"/>
<rect x="991" y="443.35" width="9" height="8.85" fill="#c090c0"/>
<rect x="982" y="452.20" width="9" height="8.85" fill="#60c8c0"/>
<rect x="991" y="452.20" width="9" height="8.85" fill="#c8a0c8"/>
<line x1="982" y1="80.50" x2="1000" y2="80.50" stroke="#fff" stroke-opacity="0.35" stroke-width="0.6"/>
<line x1="982" y1="89.35" x2="1000" y2="89.35" stroke="#fff" stroke-opacity="0.35" stroke-width="0.6"/>
<line x1="982" y1="98.20" x2="1000" y2="98.20" stroke="#fff" stroke-opacity="0.35" stroke-width="0.6"/>
<line x1="982" y1="107.05" x2="1000" y2="107.05" stroke="#fff" stroke-opacity="0.35" stroke-width="0.6"/>
<line x1="982" y1="115.90" x2="1000" y2="115.90" stroke="#fff" stroke-opacity="0.35" stroke-width="0.6"/>
<line x1="982" y1="124.75" x2="1000" y2="124.75" stroke="#fff" stroke-opacity="0.35" stroke-width="0.6"/>
<line x1="982" y1="133.60" x2="1000" y2="133.60" stroke="#fff" stroke-opacity="0.35" stroke-width="0.6"/>
<line x1="982" y1="142.45" x2="1000" y2="142.45" stroke="#fff" stroke-opacity="0.35" stroke-width="0.6"/>
<line x1="982" y1="151.30" x2="1000" y2="151.30" stroke="#fff" stroke-opacity="0.35" stroke-width="0.6"/>
<line x1="982" y1="160.15" x2="1000" y2="160.15" stroke="#fff" stroke-opacity="0.35" stroke-width="0.6"/>
<line x1="982" y1="169.00" x2="1000" y2="169.00" stroke="#fff" stroke-opacity="0.35" stroke-width="0.6"/>
<line x1="982" y1="177.85" x2="1000" y2="177.85" stroke="#fff" stroke-opacity="0.35" stroke-width="0.6"/>
<line x1="982" y1="186.70" x2="1000" y2="186.70" stroke="#fff" stroke-opacity="0.35" stroke-width="0.6"/>
<line x1="982" y1="195.55" x2="1000" y2="195.55" stroke="#fff" stroke-opacity="0.35" stroke-width="0.6"/>
<line x1="982" y1="204.40" x2="1000" y2="204.40" stroke="#fff" stroke-opacity="0.35" stroke-width="0.6"/>
<line x1="982" y1="213.25" x2="1000" y2="213.25" stroke="#fff" stroke-opacity="0.35" stroke-width="0.6"/>
<line x1="982" y1="222.10" x2="1000" y2="222.10" stroke="#fff" stroke-opacity="0.35" stroke-width="0.6"/>
<line x1="982" y1="230.95" x2="1000" y2="230.95" stroke="#fff" stroke-opacity="0.35" stroke-width="0.6"/>
<line x1="982" y1="239.80" x2="1000" y2="239.80" stroke="#fff" stroke-opacity="0.35" stroke-width="0.6"/>
<line x1="982" y1="248.65" x2="1000" y2="248.65" stroke="#fff" stroke-opacity="0.35" stroke-width="0.6"/>
<line x1="982" y1="257.50" x2="1000" y2="257.50" stroke="#fff" stroke-opacity="0.35" stroke-width="0.6"/>
<line x1="982" y1="266.35" x2="1000" y2="266.35" stroke="#fff" stroke-opacity="0.35" stroke-width="0.6"/>
<line x1="982" y1="275.20" x2="1000" y2="275.20" stroke="#fff" stroke-opacity="0.35" stroke-width="0.6"/>
<line x1="982" y1="284.05" x2="1000" y2="284.05" stroke="#fff" stroke-opacity="0.35" stroke-width="0.6"/>
<line x1="982" y1="292.90" x2="1000" y2="292.90" stroke="#fff" stroke-opacity="0.35" stroke-width="0.6"/>
<line x1="982" y1="301.75" x2="1000" y2="301.75" stroke="#fff" stroke-opacity="0.35" stroke-width="0.6"/>
<line x1="982" y1="310.60" x2="1000" y2="310.60" stroke="#fff" stroke-opacity="0.35" stroke-width="0.6"/>
<line x1="982" y1="319.45" x2="1000" y2="319.45" stroke="#fff" stroke-opacity="0.35" stroke-width="0.6"/>
<line x1="982" y1="328.30" x2="1000" y2="328.30" stroke="#fff" stroke-opacity="0.35" stroke-width="0.6"/>
<line x1="982" y1="337.15" x2="1000" y2="337.15" stroke="#fff" stroke-opacity="0.35" stroke-width="0.6"/>
<line x1="982" y1="346.00" x2="1000" y2="346.00" stroke="#fff" stroke-opacity="0.35" stroke-width="0.6"/>
<line x1="982" y1="354.85" x2="1000" y2="354.85" stroke="#fff" stroke-opacity="0.35" stroke-width="0.6"/>
<line x1="982" y1="363.70" x2="1000" y2="363.70" stroke="#fff" stroke-opacity="0.35" stroke-width="0.6"/>
<line x1="982" y1="372.55" x2="1000" y2="372.55" stroke="#fff" stroke-opacity="0.35" stroke-width="0.6"/>
<line x1="982" y1="381.40" x2="1000" y2="381.40" stroke="#fff" stroke-opacity="0.35" stroke-width="0.6"/>
<line x1="982" y1="390.25" x2="1000" y2="390.25" stroke="#fff" stroke-opacity="0.35" stroke-width="0.6"/>
<line x1="982" y1="399.10" x2="1000" y2="399.10" stroke="#fff" stroke-opacity="0.35" stroke-width="0.6"/>
<line x1="982" y1="407.95" x2="1000" y2="407.95" stroke="#fff" stroke-opacity="0.35" stroke-width="0.6"/>
<line x1="982" y1="416.80" x2="1000" y2="416.80" stroke="#fff" stroke-opacity="0.35" stroke-width="0.6"/>
<line x1="982" y1="425.65" x2="1000" y2="425.65" stroke="#fff" stroke-opacity="0.35" stroke-width="0.6"/>
<line x1="982" y1="434.50" x2="1000" y2="434.50" stroke="#fff" stroke-opacity="0.35" stroke-width="0.6"/>
<line x1="982" y1="443.35" x2="1000" y2="443.35" stroke="#fff" stroke-opacity="0.35" stroke-width="0.6"/>
<line x1="982" y1="452.20" x2="1000" y2="452.20" stroke="#fff" stroke-opacity="0.35" stroke-width="0.6"/>
<line x1="982" y1="461.05" x2="1000" y2="461.05" stroke="#fff" stroke-opacity="0.35" stroke-width="0.6"/>
<line x1="991" y1="80" x2="991" y2="455" stroke="#fff" stroke-opacity="0.35" stroke-width="0.6"/>
  <path d="M990,67 L992.5,69 L990,71 Z" fill="#222"/><rect x="994" y="48" width="6" height="32" fill="#eef0f2" opacity="0.7"/>

  <!-- shape -->
  <path d="M268,156 L454.3,156 A34,33.8 0 0 1 488.3,189.8 L488.3,368.2 A34,34 0 0 1 454.3,402.2 L167.5,402.2 A32.2,32.2 0 0 1 135.3,370 L237.8,190 L238,188 A30,32 0 0 1 268,156 Z" fill="#009de6" stroke="#231815" stroke-width="5" stroke-linejoin="round"/>
  <path d="M268,156 L454.3,156 A34,33.8 0 0 1 488.3,189.8 L488.3,368.2 A34,34 0 0 1 454.3,402.2 L167.5,402.2 A32.2,32.2 0 0 1 135.3,370 L237.8,190 L238,188 A30,32 0 0 1 268,156 Z" fill="none" stroke="#6a6468" stroke-opacity="0.35" stroke-width="0.9" stroke-dasharray="1.1,2.2"/>
</svg>
<!-- tab strip texts -->
<div class="t" style="left:976px;top:84px;font-size:7px;color:#1a1a1a;-webkit-text-stroke:0.2px #1a1a1a;transform-origin:0 0;transform:rotate(90deg) translateY(-3.5px)">插入字符</div>
<div class="t" style="left:976px;top:132px;font-size:7px;color:#1a1a1a;-webkit-text-stroke:0.2px #1a1a1a;transform-origin:0 0;transform:rotate(90deg) translateY(-3.5px)">变换</div>
<div class="t" style="left:976px;top:164px;font-size:7px;color:#1a1a1a;-webkit-text-stroke:0.2px #1a1a1a;transform-origin:0 0;transform:rotate(90deg) translateY(-3.5px)">对齐与分布</div>
<div class="t" style="left:976px;top:226px;font-size:7px;color:#1a1a1a;-webkit-text-stroke:0.2px #1a1a1a;transform-origin:0 0;transform:rotate(90deg) translateY(-3.5px);letter-spacing:-0.2px">圆角/扇形角/倒棱角</div>
<!-- overlays -->
<div class="t" style="left:623px;top:9.5px;font-size:9.5px;font-weight:bold;color:#3a3418;letter-spacing:-0.9px;-webkit-text-stroke:0.5px #3a3418;text-shadow:0.5px 0.5px 0 #c8b870,-0.3px -0.3px 0 #f0e8c0">会不会被人知<span style="color:#1e2e44;-webkit-text-stroke:0.5px #1e2e44">道</span></div>
<div class="t" style="left:750px;top:28.5px;font-size:9.5px;font-weight:bold;color:#1a3050;letter-spacing:-0.9px;-webkit-text-stroke:0.5px #1a3050;text-shadow:0.5px 0.5px 0 #5a7aa0,-0.4px -0.4px 0 #e0e8f0">我们再删减步减少</div>

</body></html>
